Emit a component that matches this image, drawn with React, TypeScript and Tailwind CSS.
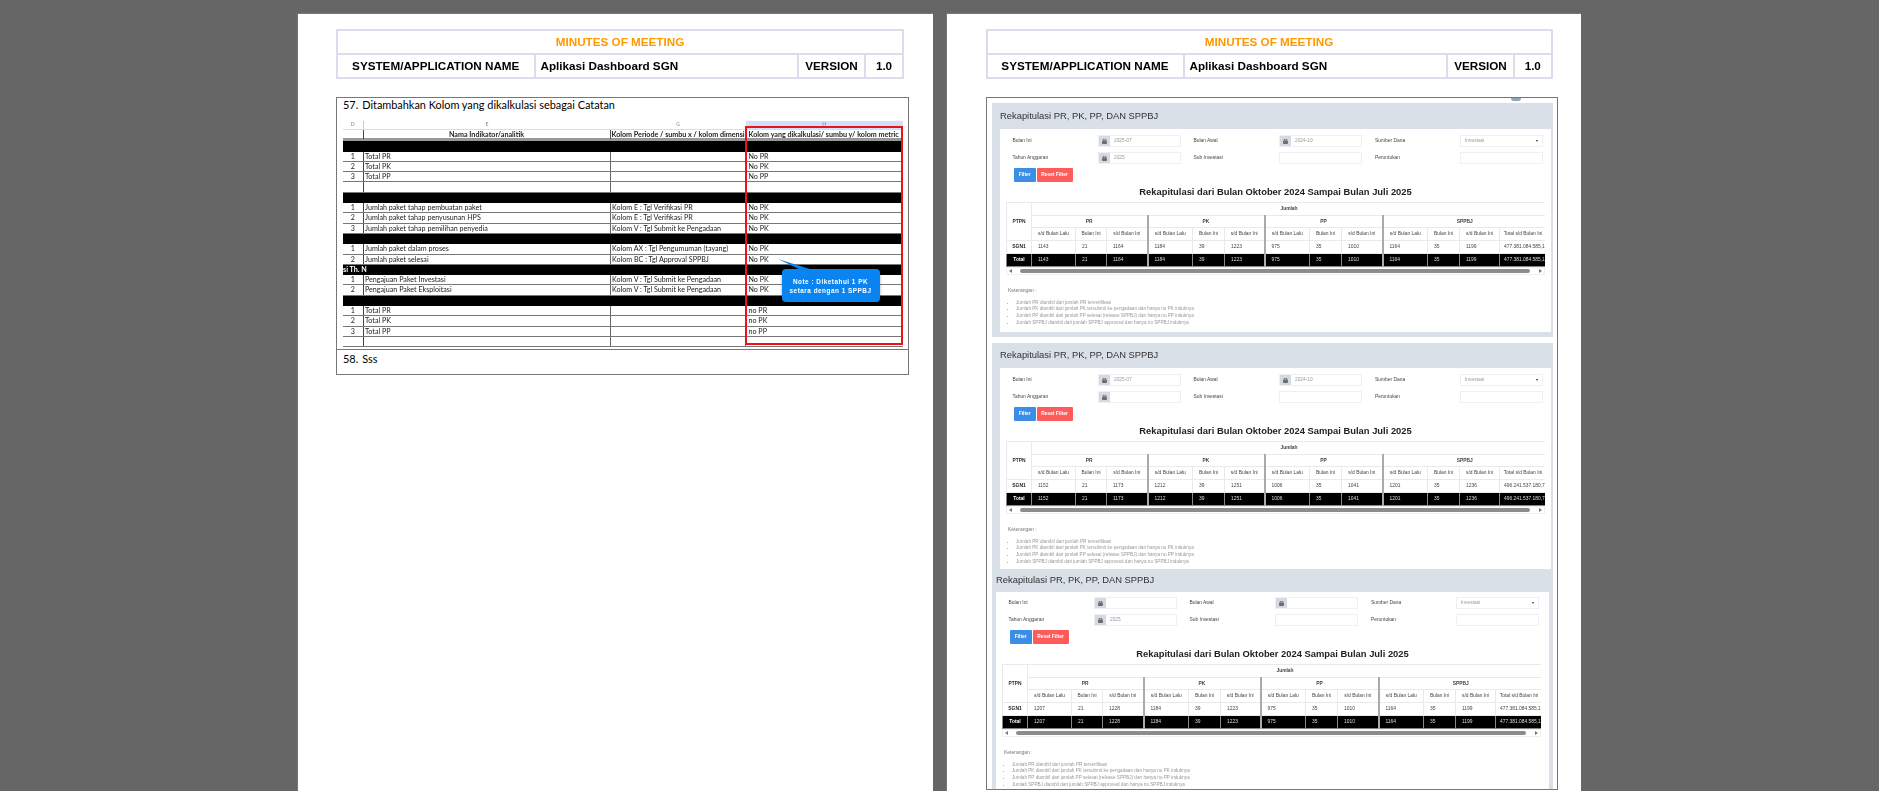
import { FaCalendarAlt } from "react-icons/fa";

type SheetRow = { no?: string; name?: string; dim?: string; metric?: string; black?: boolean; note?: string };

const sheetRows: SheetRow[] = [
  { black: true },
  { no: "1", name: "Total PR", metric: "No PR" },
  { no: "2", name: "Total PK", metric: "No PK" },
  { no: "3", name: "Total PP", metric: "No PP" },
  {},
  { black: true },
  { no: "1", name: "Jumlah paket tahap pembuatan paket", dim: "Kolom E : Tgl Verifikasi PR", metric: "No PK" },
  { no: "2", name: "Jumlah paket tahap penyusunan HPS", dim: "Kolom E : Tgl Verifikasi PR", metric: "No PK" },
  { no: "3", name: "Jumlah paket tahap pemilihan penyedia", dim: "Kolom V : Tgl Submit ke Pengadaan", metric: "No PK" },
  { black: true },
  { no: "1", name: "Jumlah paket dalam proses", dim: "Kolom AX : Tgl Pengumuman (tayang)", metric: "No PK" },
  { no: "2", name: "Jumlah paket selesai", dim: "Kolom BC : Tgl Approval SPPBJ", metric: "No PK" },
  { black: true, note: "si Th. N" },
  { no: "1", name: "Pengajuan Paket Investasi", dim: "Kolom V : Tgl Submit ke Pengadaan", metric: "No PK" },
  { no: "2", name: "Pengajuan Paket Eksploitasi", dim: "Kolom V : Tgl Submit ke Pengadaan", metric: "No PK" },
  { black: true },
  { no: "1", name: "Total PR", metric: "no PR" },
  { no: "2", name: "Total PK", metric: "no PK" },
  { no: "3", name: "Total PP", metric: "no PP" },
  {},
];

function MeetingHeader({ cols, name }: { cols: string; name: string }) {
  return (
    <div className="w-fit border-2 border-[#dcdcec] font-['Liberation_Sans',sans-serif] font-bold text-black blur-[0.35px]">
      <div className="flex h-[24px] items-center justify-center border-b-2 border-[#dcdcec] text-[11.7px] text-[#ff9900]">
        MINUTES OF MEETING
      </div>
      <div className={`grid h-[22px] items-stretch text-[11.7px] ${cols}`}>
        <div className="flex items-center justify-center border-r-2 border-[#dcdcec]">SYSTEM/APPLICATION NAME</div>
        <div className="flex items-center border-r-2 border-[#dcdcec] pl-[5px]">{name}</div>
        <div className="flex items-center justify-center border-r-2 border-[#dcdcec]">VERSION</div>
        <div className="flex items-center justify-center">1.0</div>
      </div>
    </div>
  );
}

function Spreadsheet() {
  return (
    <div className="relative ml-[6px] w-[560px] font-['Lato',sans-serif] text-[7.15px] text-[#222] blur-[0.35px]">
      <div className="grid h-[7.5px] grid-cols-[20.5px_247px_135px_157.5px] text-center text-[5px] leading-[7.5px] text-[#888]">
        <div className="border-r border-[#ccc]">D</div>
        <div>E</div>
        <div>G</div>
        <div className="bg-[#cfe0f7]">H</div>
      </div>
      <div className="grid h-[12.8px] grid-cols-[20.5px_247px_135px_157.5px] border-y border-t-[#ddd] border-b-[#999] border-b-[3px] text-center font-bold leading-[9px] text-[#222]">
        <div className="border-r border-[#444]" />
        <div className="border-r border-[#555]">Nama Indikator/analitik</div>
        <div className="overflow-hidden whitespace-nowrap border-r border-[#555] text-left pl-[1px]">
          Kolom Periode / sumbu x / kolom dimensi
        </div>
        <div className="overflow-hidden whitespace-nowrap text-left pl-[3px]">Kolom yang dikalkulasi/ sumbu y/ kolom metric</div>
      </div>
      {sheetRows.map((r, i) =>
        r.black ? (
          <div key={i} className="h-[10.3px] bg-black text-[7.15px] font-bold leading-[10px] text-white">
            {r.note}
          </div>
        ) : (
          <div key={i} className="grid h-[10.3px] grid-cols-[20.5px_247px_135px_157.5px] border-b border-[#777] leading-[9.3px]">
            <div className="border-r border-[#444] text-center">{r.no}</div>
            <div className="border-r border-[#666] pl-[1.5px]">{r.name}</div>
            <div className="border-r border-[#666] pl-[1.5px]">{r.dim}</div>
            <div className="pl-[3px]">{r.metric}</div>
          </div>
        ),
      )}
      {/* highlight on the metric column */}
      <div className="absolute left-[401.5px] top-[5px] h-[219px] w-[158.5px] border-2 border-[#e8141c]" />
      <svg className="absolute left-[434px] top-[137px]" width="40" height="14" viewBox="0 0 40 14">
        <path d="M1 1 L36 12 L24 12 Z" fill="#0a84f0" />
      </svg>
      <div className="absolute left-[438.5px] top-[148px] flex h-[33px] w-[98px] flex-col items-center justify-center rounded-[4px] bg-[#0a84f0] font-['Liberation_Sans',sans-serif] text-[6.4px] font-bold leading-[9px] tracking-[0.5px] text-white shadow-[0_1px_3px_rgba(0,0,0,0.35)]">
        <span>Note : Diketahui 1 PK</span>
        <span>setara dengan 1 SPPBJ</span>
      </div>
    </div>
  );
}

function FilterInput({ value, icon }: { value?: string; icon?: boolean }) {
  return (
    <div className="flex h-[12px] items-center border border-[#eef0f3] bg-white text-[4.8px] text-[#999]">
      {icon && (
        <span className="flex h-full w-[11px] shrink-0 items-center justify-center bg-[#d5dae2] text-[#444]">
          <FaCalendarAlt className="h-[5px] w-[5px]" />
        </span>
      )}
      <span className="pl-[4px]">{value}</span>
    </div>
  );
}

type Figures = string[];

function Recap({ row, money }: { row: Figures; money: string }) {
  const heads = ["s/d Bulan Lalu", "Bulan Ini", "s/d Bulan Ini"];
  const groupStart = (i: number) => i > 0 && i % 3 === 0 && i < 12;
  return (
    <div className="ml-[6px] w-[538.5px] overflow-hidden">
      <table className="w-[540px] table-fixed border-collapse text-[4.9px] text-[#444]">
        <colgroup>
          <col className="w-[25px]" />
          <col className="w-[44px]" />
          <col className="w-[31px]" />
          <col className="w-[41px]" />
          <col className="w-[45px]" />
          <col className="w-[32px]" />
          <col className="w-[40px]" />
          <col className="w-[45px]" />
          <col className="w-[32px]" />
          <col className="w-[41px]" />
          <col className="w-[45px]" />
          <col className="w-[32px]" />
          <col className="w-[40px]" />
          <col className="w-[47px]" />
        </colgroup>
        <tbody>
          <tr className="h-[13px]">
            <td rowSpan={3} className="border border-[#e8eaee] text-center font-bold text-[#333]">PTPN</td>
            <td colSpan={13} className="border border-[#e8eaee] text-center font-bold">Jumlah</td>
          </tr>
          <tr className="h-[12px]">
            <td colSpan={3} className="border border-[#e8eaee] text-center font-bold">PR</td>
            <td colSpan={3} className="border border-[#e8eaee] border-l-2 border-l-[#aaa] text-center font-bold">PK</td>
            <td colSpan={3} className="border border-[#e8eaee] border-l-2 border-l-[#aaa] text-center font-bold">PP</td>
            <td colSpan={4} className="border border-[#e8eaee] border-l-2 border-l-[#aaa] text-center font-bold">SPPBJ</td>
          </tr>
          <tr className="h-[13px]">
            {Array.from({ length: 12 }, (_, i) => (
              <td key={i} className={`whitespace-nowrap border border-[#e8eaee] text-center ${groupStart(i) ? "border-l-2 border-l-[#aaa]" : ""}`}>
                {heads[i % 3]}
              </td>
            ))}
            <td className="whitespace-nowrap border border-[#e8eaee] text-center">Total s/d Bulan Ini</td>
          </tr>
          <tr className="h-[13px]">
            <td className="border border-[#e8eaee] text-center font-bold text-[#222]">SGN1</td>
            {row.map((v, i) => (
              <td key={i} className={`border border-[#e8eaee] pl-[6px] ${groupStart(i) ? "border-l-2 border-l-[#aaa]" : ""}`}>{v}</td>
            ))}
            <td className="whitespace-nowrap border border-[#e8eaee] pl-[4px]">{money}</td>
          </tr>
          <tr className="h-[13px] bg-black text-[#ddd]">
            <td className="border border-[#888] text-center font-bold text-white">Total</td>
            {row.map((v, i) => (
              <td key={i} className={`border border-[#888] pl-[6px] ${groupStart(i) ? "border-l-2 border-l-[#aaa]" : ""}`}>{v}</td>
            ))}
            <td className="whitespace-nowrap border border-[#888] pl-[4px]">{money}</td>
          </tr>
        </tbody>
      </table>
      <div className="flex h-[8px] items-center justify-between border border-[#eef0f3] px-[2px]">
        <span className="h-0 w-0 border-y-[2.5px] border-r-[3px] border-y-transparent border-r-[#777]" />
        <span className="h-[4px] w-[510px] rounded-[2px] bg-[#8c8c8c]" />
        <span className="h-0 w-0 border-y-[2.5px] border-l-[3px] border-y-transparent border-l-[#777]" />
      </div>
    </div>
  );
}

function DashboardShot({
  values,
  row,
  money,
  sectionClass,
  titleClass,
  cardClass,
}: {
  values: [string, string, string];
  row: Figures;
  money: string;
  sectionClass?: string;
  titleClass: string;
  cardClass: string;
}) {
  return (
    <section className={`w-[561px] bg-[#d9e0e8] font-['Liberation_Sans',sans-serif] blur-[0.4px] ${sectionClass ?? ""}`}>
      <h2 className={`flex items-center text-[9.4px] text-[#333] ${titleClass}`}>Rekapitulasi PR, PK, PP, DAN SPPBJ</h2>
      <div className={`overflow-hidden bg-white ${cardClass}`}>
        <div className="grid grid-cols-[85.5px_83px_12.5px_85.5px_83px_13px_85px_83px] gap-y-[5px] pl-[12.5px] text-[4.9px] text-[#444]">
          <div className="leading-[12px]">Bulan Ini</div>
          <FilterInput icon value={values[0]} />
          <div />
          <div className="leading-[12px]">Bulan Awal</div>
          <FilterInput icon value={values[1]} />
          <div />
          <div className="leading-[12px]">Sumber Dana</div>
          <div className="flex h-[12px] items-center justify-between border border-[#eef0f3] px-[4px] text-[#999]">
            Investasi <span className="h-0 w-0 border-x-[1.5px] border-t-[2px] border-x-transparent border-t-[#333]" />
          </div>
          <div className="leading-[12px]">Tahun Anggaran</div>
          <FilterInput icon value={values[2]} />
          <div />
          <div className="leading-[12px]">Sub Investasi</div>
          <FilterInput />
          <div />
          <div className="leading-[12px]">Peruntukan</div>
          <FilterInput />
        </div>
        <div className="ml-[14px] mt-[4px] flex gap-[1px] text-[4.9px] font-bold text-white">
          <button className="h-[14px] w-[21.5px] rounded-[1px] bg-[#3a8ee6]">Filter</button>
          <button className="h-[14px] w-[36px] rounded-[1px] bg-[#ff5b5b]">Reset Filter</button>
        </div>
        <div className="flex h-[20px] items-center justify-center text-[9.4px] font-bold text-[#222]">
          Rekapitulasi dari Bulan Oktober 2024 Sampai Bulan Juli 2025
        </div>
        <Recap row={row} money={money} />
        <div className="ml-[8px] mt-[12px] text-[4.65px] leading-[6.7px] text-[#999]">
          <p className="mb-[6px] text-[5px] text-[#777]">Keterangan :</p>
          <ul className="list-disc pl-[8px]">
            <li>Jumlah PR diambil dari jumlah PR terverifikasi</li>
            <li>Jumlah PK diambil dari jumlah PK tersubmit ke pengadaan dan hanya no PK induknya</li>
            <li>Jumlah PP diambil dari jumlah PP selesai (release SPPBJ) dan hanya no PP induknya</li>
            <li>Jumlah SPPBJ diambil dari jumlah SPPBJ approved dan hanya no SPPBJ induknya</li>
          </ul>
        </div>
      </div>
    </section>
  );
}

export default function App() {
  return (
    <div className="flex h-[791px] w-[1879px] gap-[13px] overflow-hidden bg-[#666] pl-[297px] pt-[13px]">
      <div className="h-[778px] w-[636px] border-l border-t border-[#777] bg-white pl-[38px] pt-[15px]">
        <MeetingHeader cols="grid-cols-[197.5px_263.5px_67px_36px]" name="Aplikasi Dashboard SGN" />
        <div className="mt-[18px] w-[573px] border border-[#777]">
          <div className="h-[252px] border-b border-[#777]">
            <p className="flex h-[14px] items-center gap-[4px] pl-[6px] font-['Lato',sans-serif] text-[10.9px] text-black">
              <span>57.</span>
              <span>Ditambahkan Kolom yang dikalkulasi sebagai Catatan</span>
            </p>
            <div className="h-[9px]" />
            <Spreadsheet />
          </div>
          <p className="flex h-[24px] gap-[4px] pl-[6px] pt-[1px] font-['Lato',sans-serif] text-[10.9px] text-black">
            <span>58.</span>
            <span>Sss</span>
          </p>
        </div>
      </div>
      <div className="h-[778px] w-[635px] border-l border-t border-[#777] bg-white pl-[38.5px] pt-[15px]">
        <MeetingHeader cols="grid-cols-[197px_263.5px_67px_35.5px]" name="Aplikasi Dashboard SGN" />
        <div className="relative mt-[18px] h-[693px] w-[572px] overflow-hidden border border-[#777] pl-[5.5px] pt-[5px]">
          <span className="absolute left-[524px] top-0 h-[3px] w-[10px] rounded-b-full bg-[#8fa6b8]" />
          <DashboardShot
            values={["2025-07", "2024-10", "2025"]}
            row={["1143", "21", "1164", "1184", "39", "1223", "975", "35", "1010", "1164", "35", "1199"]}
            money="477.381.084.585,16"
            sectionClass="pb-[5px]"
            titleClass="h-[26px] pl-[8px]"
            cardClass="ml-[8px] mr-[2px] h-[203px] pt-[6px]"
          />
          <div className="h-[6px]" />
          <DashboardShot
            values={["2025-07", "2024-10", ""]}
            row={["1152", "21", "1173", "1212", "39", "1251", "1006", "35", "1041", "1201", "35", "1236"]}
            money="496.241.537.180,76"
            titleClass="h-[25px] pl-[8px]"
            cardClass="ml-[8px] mr-[2px] h-[201px] pt-[6px]"
          />
          <DashboardShot
            values={["", "", "2025"]}
            row={["1207", "21", "1228", "1184", "39", "1223", "975", "35", "1010", "1164", "35", "1199"]}
            money="477.381.084.585,16"
            titleClass="h-[23px] pl-[4px]"
            cardClass="mx-[4px] h-[198px] pt-[5px]"
          />
        </div>
      </div>
    </div>
  );
}
